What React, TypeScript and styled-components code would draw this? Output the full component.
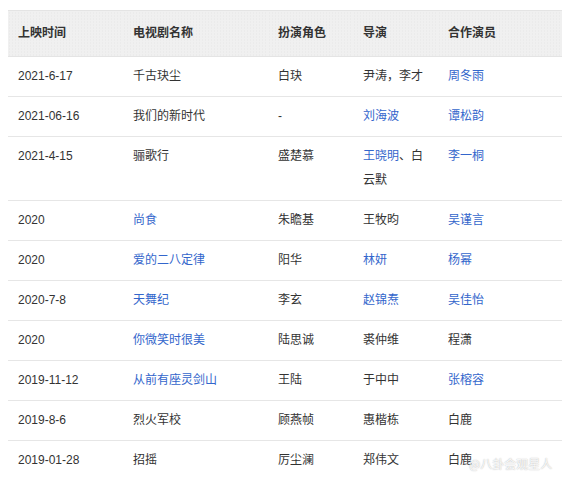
import React from "react";
import styled, { createGlobalStyle } from "styled-components";

const Global = createGlobalStyle`
  html, body { margin: 0; padding: 0; background: #fff; }
  body {
    font-family: "Liberation Sans", "Noto Sans CJK SC", sans-serif;
    font-size: 12px;
    color: #333;
  }
`;

const Page = styled.div`
  position: relative;
  padding: 10px 0 0 8px;
  width: 562px;
  height: 479px;
  box-sizing: border-box;
  overflow: hidden;
`;

const Table = styled.table`
  width: 554px;
  border-collapse: collapse;
  table-layout: fixed;
  border-top: 1px solid #e4e4e4;
`;

const HeadCell = styled.th`
  text-align: left;
  font-weight: bold;
  color: #333;
  line-height: 24px;
  padding: 10px 10px 11px 10px;
  background-color: #f0f0f0;
  background-image: radial-gradient(#e6e6e6 0.6px, transparent 0.8px);
  background-size: 3px 3px;
  border-bottom: 1px solid #e4e4e4;
`;

const Cell = styled.td`
  line-height: 24px;
  padding: 7px 10px 8px 10px;
  vertical-align: top;
  border-bottom: 1px solid #e6e6e6;
  color: #333;
  word-break: break-all;
`;

const Link = styled.span`
  color: #3366cc;
`;

const Watermark = styled.div`
  position: absolute;
  left: 469px;
  top: 456px;
  font-size: 12px;
  line-height: 16px;
  white-space: nowrap;
  color: rgba(255, 255, 255, 0.9);
  text-shadow: 0 0 1px rgba(0, 0, 0, 0.25), 0 0 2px rgba(0, 0, 0, 0.12);
  font-family: "Noto Sans CJK SC", sans-serif;
`;

type Part = string | { link: string };
type Row = [string, Part[], Part[], Part[], Part[]];

const rows: Row[] = [
  ["2021-6-17", ["千古玦尘"], ["白玦"], ["尹涛，李才"], [{ link: "周冬雨" }]],
  ["2021-06-16", ["我们的新时代"], ["-"], [{ link: "刘海波" }], [{ link: "谭松韵" }]],
  ["2021-4-15", ["骊歌行"], ["盛楚慕"], [{ link: "王晓明" }, "、白云默"], [{ link: "李一桐" }]],
  ["2020", [{ link: "尚食" }], ["朱瞻基"], ["王牧昀"], [{ link: "吴谨言" }]],
  ["2020", [{ link: "爱的二八定律" }], ["阳华"], [{ link: "林妍" }], [{ link: "杨幂" }]],
  ["2020-7-8", [{ link: "天舞纪" }], ["李玄"], [{ link: "赵锦焘" }], [{ link: "吴佳怡" }]],
  ["2020", [{ link: "你微笑时很美" }], ["陆思诚"], ["裘仲维"], ["程潇"]],
  ["2019-11-12", [{ link: "从前有座灵剑山" }], ["王陆"], ["于中中"], [{ link: "张榕容" }]],
  ["2019-8-6", ["烈火军校"], ["顾燕帧"], ["惠楷栋"], ["白鹿"]],
  ["2019-01-28", ["招摇"], ["厉尘澜"], ["郑伟文"], ["白鹿"]],
];

const renderParts = (parts: Part[]) =>
  parts.map((p, i) =>
    typeof p === "string" ? <React.Fragment key={i}>{p}</React.Fragment> : <Link key={i}>{p.link}</Link>
  );

export default function App() {
  return (
    <>
      <Global />
      <Page>
        <Table>
          <colgroup>
            <col style={{ width: 115 }} />
            <col style={{ width: 145 }} />
            <col style={{ width: 85 }} />
            <col style={{ width: 85 }} />
            <col />
          </colgroup>
          <thead>
            <tr>
              <HeadCell>上映时间</HeadCell>
              <HeadCell>电视剧名称</HeadCell>
              <HeadCell>扮演角色</HeadCell>
              <HeadCell>导演</HeadCell>
              <HeadCell>合作演员</HeadCell>
            </tr>
          </thead>
          <tbody>
            {rows.map((r, i) => (
              <tr key={i}>
                <Cell>{r[0]}</Cell>
                <Cell>{renderParts(r[1])}</Cell>
                <Cell>{renderParts(r[2])}</Cell>
                <Cell>{renderParts(r[3])}</Cell>
                <Cell>{renderParts(r[4])}</Cell>
              </tr>
            ))}
          </tbody>
        </Table>
        <Watermark>@八卦会观星人</Watermark>
      </Page>
    </>
  );
}
